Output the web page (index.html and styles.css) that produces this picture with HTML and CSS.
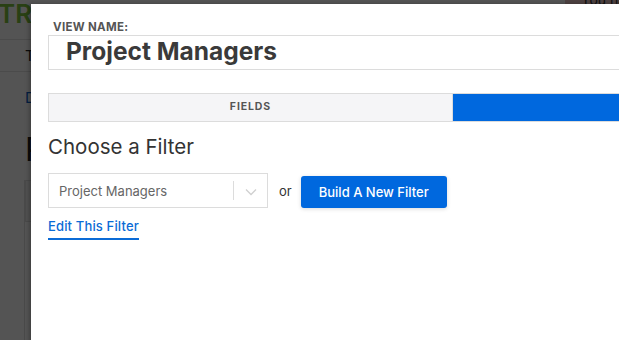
FILE: index.html
```html
<!DOCTYPE html>
<html>
<head>
<meta charset="utf-8">
<link rel="stylesheet" href="styles.css">
</head>
<body>
<div class="page">
  <header class="page-header">
    <div class="logo">TRACK</div>
    <div class="notice">You have unsaved changes</div>
  </header>
  <nav class="page-nav"><span>Tasks</span></nav>
  <div class="crumbs"><a>Dashboard</a></div>
  <h1 class="page-title">Projects</h1>
  <div class="page-panel">
    <div class="panel-head"></div>
  </div>
</div>
<div class="overlay"></div>
<div class="modal">
  <label class="field-label">VIEW NAME:</label>
  <div class="name-input">Project Managers</div>
  <div class="tabs">
    <div class="tab">FIELDS</div>
    <div class="tab tab-active">FILTER</div>
  </div>
  <h2 class="section-title">Choose a Filter</h2>
  <div class="filter-row">
    <div class="select">
      <span class="select-value">Project Managers</span>
      <span class="select-sep"></span>
      <span class="select-arrow">
        <svg width="12" height="8" viewBox="0 0 12 8"><path d="M1 1.5 L6 6.5 L11 1.5" fill="none" stroke="#d0d0d0" stroke-width="1.3"/></svg>
      </span>
    </div>
    <span class="or">or</span>
    <button class="btn-primary">Build A New Filter</button>
  </div>
  <a class="edit-link">Edit This Filter</a>
</div>
</body>
</html>
```
FILE: styles.css
```css
* { box-sizing: border-box; }
html, body { margin: 0; padding: 0; }
body {
  width: 619px;
  height: 340px;
  overflow: hidden;
  position: relative;
  font-family: Inter, "Open Sans", sans-serif;
  background: #ffffff;
}
.page { padding: 0; }
.page-header {
  height: 40px;
  border-bottom: 1px solid #e2e2e2;
  display: flex;
  justify-content: space-between;
  align-items: flex-start;
}
.logo {
  font-size: 26px;
  line-height: 26px;
  font-weight: 600;
  color: #7cc23e;
  margin-left: -2px;
  margin-top: 1px;
}
.notice {
  background: #e8c4c4;
  color: #333;
  font-size: 14px;
  line-height: 12px;
  padding: 0 10px 6px 16px;
  width: 54px;
  white-space: nowrap;
  overflow: hidden;
  margin-top: -6px;
}
.page-nav {
  height: 32px;
  border-bottom: 1px solid #e2e2e2;
  padding-left: 25px;
  font-size: 15px;
  line-height: 31px;
  color: #222;
}
.crumbs {
  padding: 16px 0 0 25px;
  font-size: 15px;
  color: #0b5ec4;
  height: 58px;
}
.page-title {
  margin: 0;
  padding-left: 25px;
  font-size: 32px;
  font-weight: 400;
  color: #222;
  line-height: 40px;
}
.page-panel {
  margin: 10px 0 0 24px;
  height: 200px;
  border-left: 1px solid #e0e0e0;
}
.panel-head {
  height: 42px;
  border: 1px solid #e0e0e0;
  background: #f4f4f4;
}
.overlay {
  position: absolute;
  inset: 0;
  background: rgba(0, 0, 0, 0.67);
}
.modal {
  position: absolute;
  left: 31px;
  top: 4px;
  width: 760px;
  height: 420px;
  background: #fff;
  padding: 17px 0 0 17px;
  box-shadow: -2px 0 4px rgba(0,0,0,0.25);
}
.field-label {
  display: block;
  margin-left: 5px;
  font-size: 11.5px;
  font-weight: 700;
  color: #555;
  line-height: 13px;
  letter-spacing: 0.3px;
}
.name-input {
  margin-top: 1px;
  height: 35px;
  border: 1px solid #dcdcdc;
  padding-left: 17px;
  font-size: 24.5px;
  font-weight: 700;
  color: #3a3a3a;
  line-height: 31px;
}
.tabs {
  margin-top: 23px;
  display: flex;
  height: 29px;
  border: 1px solid #dcdcdc;
}
.tab {
  width: 404px;
  background: #f5f5f7;
  font-size: 10.5px;
  font-weight: 700;
  color: #555;
  text-align: center;
  line-height: 26px;
  letter-spacing: 0.9px;
  border-right: 1px solid #dcdcdc;
}
.tab-active {
  flex: 1;
  background: #0068de;
  color: #0068de;
  border-right: none;
}
.section-title {
  margin: 12px 0 0 0;
  font-size: 20.5px;
  font-weight: 400;
  color: #333;
  line-height: 26px;
}
.filter-row {
  margin-top: 13px;
  display: flex;
  align-items: center;
}
.select {
  width: 220px;
  height: 35px;
  border: 1px solid #dcdcdc;
  display: flex;
  align-items: center;
  padding-left: 10px;
}
.select-value {
  flex: 1;
  font-size: 13px;
  color: #666;
}
.select-sep {
  width: 1px;
  height: 19px;
  background: #dcdcdc;
}
.select-arrow {
  width: 33px;
  display: flex;
  justify-content: center;
  padding-top: 2px;
}
.or {
  margin-left: 11px;
  font-size: 13px;
  color: #333;
}
.btn-primary {
  margin-left: 9px;
  margin-top: 2px;
  height: 32px;
  width: 146px;
  border: none;
  border-radius: 3px;
  background: #0068de;
  color: #fff;
  font-family: inherit;
  font-size: 13px;
  font-weight: 500;
  box-shadow: 0 1px 4px rgba(0,0,0,0.15);
}
.edit-link {
  display: inline-block;
  margin-top: 11px;
  font-size: 13px;
  font-weight: 500;
  color: #0b6bd6;
  border-bottom: 2px solid #0b6bd6;
  padding-bottom: 4px;
  line-height: 15px;
  letter-spacing: 0.15px;
}
```
